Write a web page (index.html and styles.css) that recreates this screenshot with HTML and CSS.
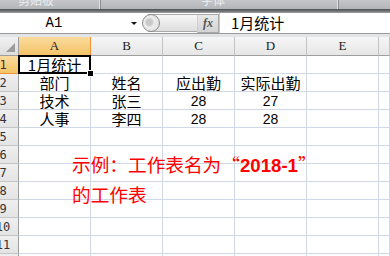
FILE: index.html
```html
<!DOCTYPE html>
<html lang="zh-CN">
<head>
<meta charset="utf-8">
<title>Excel</title>
<link rel="stylesheet" href="styles.css">
</head>
<body>
<div class="app">
  <div class="ribbon">
    <div class="rgroup g1"><span class="rlabel">剪贴板</span></div>
    <div class="rgroup g2"><span class="rlabel">字体</span></div>
    <div class="rgroup g3"></div>
  </div>
  <div class="rshadow"></div>
  <div class="fbar">
    <div class="namebox"><span class="nb-text">A1</span><span class="nb-arrow"></span></div>
    <div class="fxgroup"><span class="knob"></span><span class="fxbar"></span><span class="fxbtn">fx</span></div>
    <div class="formula">1月统计</div>
  </div>
  <div class="fgap"></div>
  <div class="sheet">
    <div class="corner"><span class="tri"></span></div>
    <div class="ch sel">A</div><div class="ch">B</div><div class="ch">C</div><div class="ch">D</div><div class="ch">E</div><div class="ch"></div>

    <div class="rh sel"><span>1</span></div>
    <div class="c active">1月统计</div><div class="c"></div><div class="c"></div><div class="c"></div><div class="c"></div><div class="c"></div>

    <div class="rh"><span>2</span></div>
    <div class="c">部门</div><div class="c">姓名</div><div class="c">应出勤</div><div class="c">实际出勤</div><div class="c"></div><div class="c"></div>

    <div class="rh"><span>3</span></div>
    <div class="c">技术</div><div class="c">张三</div><div class="c num">28</div><div class="c num">27</div><div class="c"></div><div class="c"></div>

    <div class="rh"><span>4</span></div>
    <div class="c">人事</div><div class="c">李四</div><div class="c num">28</div><div class="c num">28</div><div class="c"></div><div class="c"></div>

    <div class="rh"><span>5</span></div>
    <div class="c"></div><div class="c"></div><div class="c"></div><div class="c"></div><div class="c"></div><div class="c"></div>

    <div class="rh"><span>6</span></div>
    <div class="c"></div><div class="c"></div><div class="c"></div><div class="c"></div><div class="c"></div><div class="c"></div>

    <div class="rh"><span>7</span></div>
    <div class="c"></div><div class="c"></div><div class="c"></div><div class="c"></div><div class="c"></div><div class="c"></div>

    <div class="rh"><span>8</span></div>
    <div class="c"></div><div class="c"></div><div class="c"></div><div class="c"></div><div class="c"></div><div class="c"></div>

    <div class="rh"><span>9</span></div>
    <div class="c"></div><div class="c"></div><div class="c"></div><div class="c"></div><div class="c"></div><div class="c"></div>

    <div class="rh"><span>10</span></div>
    <div class="c"></div><div class="c"></div><div class="c"></div><div class="c"></div><div class="c"></div><div class="c"></div>

    <div class="rh"><span>11</span></div>
    <div class="c"></div><div class="c"></div><div class="c"></div><div class="c"></div><div class="c"></div><div class="c"></div>

    <div class="rh"><span>12</span></div>
    <div class="c"></div><div class="c"></div><div class="c"></div><div class="c"></div><div class="c"></div><div class="c"></div>
  </div>
  <div class="note">示例：工作表名为<span class="q">“</span><span class="yr">2018-1</span><span class="q">”</span><br>的工作表</div>
</div>
</body>
</html>
```

FILE: styles.css
```css
html, body {
  margin: 0;
  padding: 0;
  background: #ffffff;
}
.app {
  position: relative;
  width: 390px;
  height: 256px;
  overflow: hidden;
  font-family: "Noto Sans CJK SC", "Liberation Sans", sans-serif;
}

/* ribbon */
.ribbon {
  display: flex;
  height: 9px;
  overflow: hidden;
  background: linear-gradient(to bottom, #c4c6c9, #b3b5b8);
}
.rgroup {
  position: relative;
  box-sizing: border-box;
  border-right: 1px solid #8c8e91;
  box-shadow: inset -1px 0 0 #dfe1e3;
  height: 9px;
}
.g1 { width: 101px; }
.g2 { width: 238px; }
.g3 { flex: 1; border-right: none; box-shadow: none; }
.rlabel {
  display: block;
  margin-top: -7px;
  font-size: 12px;
  line-height: 14px;
  color: #eceef0;
}
.g1 .rlabel { padding-left: 18px; }
.g2 .rlabel { padding-left: 100px; }

.rshadow {
  height: 4px;
  background: linear-gradient(to bottom, #4f5153, #6d6f72 50%, #a0a2a5);
}

/* formula bar */
.fbar {
  display: flex;
  height: 20px;
  background: #ffffff;
  border-bottom: 1px solid #9a9a9a;
}
.namebox {
  position: relative;
  width: 140px;
  display: flex;
  align-items: center;
  justify-content: center;
}
.nb-text {
  font-family: "Liberation Mono", "DejaVu Sans Mono", monospace;
  font-size: 14px;
  margin-left: -32px;
  color: #000;
}
.nb-arrow {
  position: absolute;
  left: 131px;
  top: 9px;
  width: 0;
  height: 0;
  border-left: 3px solid transparent;
  border-right: 3px solid transparent;
  border-top: 3px solid #111;
}
.fxgroup {
  display: flex;
  align-items: center;
  width: 79px;
  position: relative;
}
.knob {
  position: absolute;
  left: 2px;
  top: 1px;
  width: 16px;
  height: 16px;
  border-radius: 50%;
  background: radial-gradient(circle at 40% 45%, #c9c9c9 0 3px, #ececec 5px, #dcdcdc);
  border: 1px solid #8d8d8d;
  z-index: 1;
}
.fxbar {
  flex: 1;
  height: 16px;
  margin-left: 8px;
  background: linear-gradient(to bottom, #f7f7f7, #dedede);
  border-top: 1px solid #a9a9a9;
  border-bottom: 1px solid #a9a9a9;
}
.fxbtn {
  width: 22px;
  height: 19px;
  box-sizing: border-box;
  border: 1px solid #a9a9a9;
  border-left: 1px solid #cfcfcf;
  background: linear-gradient(to bottom, #e9e9e9, #d3d3d3);
  font-family: "Liberation Serif", serif;
  font-style: italic;
  font-weight: bold;
  font-size: 12px;
  line-height: 17px;
  text-align: center;
  color: #555;
}
.formula {
  flex: 1;
  padding-left: 11px;
  font-size: 15px;
  line-height: 20px;
  color: #000;
  border-left: 1px solid #c8c8c8;
}

.fgap {
  height: 3px;
  background: #e3e4e6;
}

/* sheet grid */
.sheet {
  display: grid;
  grid-template-columns: 19px repeat(5, 72px) 1fr;
  grid-template-rows: 19px;
  grid-auto-rows: 18px;
}
.corner {
  position: relative;
  box-sizing: border-box;
  background: linear-gradient(to bottom, #f1f1f1, #dedede);
  border-right: 1px solid #9e9e9e;
  border-bottom: 1px solid #9e9e9e;
}
.tri {
  position: absolute;
  right: 3px;
  bottom: 3px;
  width: 0;
  height: 0;
  border-left: 9px solid transparent;
  border-bottom: 9px solid #9c9c9c;
}
.ch {
  box-sizing: border-box;
  background: linear-gradient(to bottom, #f6f6f6, #e6e6e6);
  border-right: 1px solid #c5c5c5;
  border-bottom: 1px solid #9e9e9e;
  font-family: "Liberation Serif", serif;
  font-size: 13px;
  line-height: 18px;
  text-align: center;
  color: #222;
}
.ch.sel {
  background: linear-gradient(to bottom, #fadb9d, #f4c468);
  border-right: 1px solid #f29436;
  border-bottom: 1px solid #f29436;
}
.rh {
  box-sizing: border-box;
  overflow: hidden;
  background: linear-gradient(to bottom, #efefef, #e4e4e4);
  border-right: 1px solid #9e9e9e;
  border-bottom: 1px solid #c5c5c5;
}
.rh span {
  display: block;
  width: 32px;
  margin-left: -13px;
  text-align: center;
  font-family: "DejaVu Sans Mono", monospace;
  font-size: 12px;
  line-height: 18px;
  color: #333;
}
.rh.sel {
  background: linear-gradient(to bottom, #fadb9d, #f4c468);
  border-right: 1px solid #f29436;
  border-bottom: 1px solid #f29436;
}
.c {
  position: relative;
  box-sizing: border-box;
  border-right: 1px solid #d0d7e5;
  border-bottom: 1px solid #d0d7e5;
  font-size: 15px;
  line-height: 18px;
  text-align: center;
  color: #000;
  white-space: nowrap;
}
.c.num {
  font-family: "Liberation Sans", sans-serif;
  font-size: 14px;
}
.c.active::after {
  content: "";
  position: absolute;
  left: -1px;
  top: -1px;
  right: -1px;
  bottom: -1px;
  border: 2px solid #000;
}
.c.active::before {
  content: "";
  position: absolute;
  right: -4px;
  bottom: -4px;
  width: 5px;
  height: 5px;
  background: #000;
  border: 1px solid #fff;
  z-index: 2;
}

/* note text box overlay */
.note {
  position: absolute;
  left: 72px;
  top: 150px;
  font-size: 18.67px;
  line-height: 28px;
  color: #ff0000;
  white-space: nowrap;
}
.yr {
  font-family: "Liberation Sans", sans-serif;
  font-weight: bold;
}
```
